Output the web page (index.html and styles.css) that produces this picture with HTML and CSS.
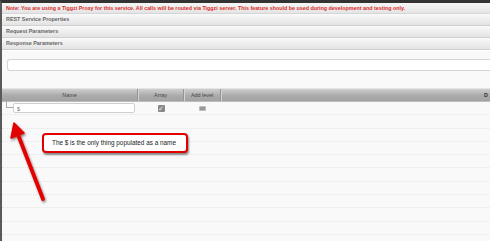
FILE: index.html
```html
<!DOCTYPE html>
<html lang="en">
<head>
    <meta charset="UTF-8">
    <title>Service Editor</title>
    <link rel="stylesheet" href="styles.css">
</head>
<body>
    <div class="note">Note: You are using a Tiggzi Proxy for this service. All calls will be routed via Tiggzi server. This feature should be used during development and testing only.</div>
    <div class="section">REST Service Properties</div>
    <div class="section">Request Parameters</div>
    <div class="section">Response Parameters</div>

    <div class="panel">
        <div class="wide-input"></div>
    </div>

    <div class="grid">
        <div class="grid-head">
            <div class="col col-name">Name</div>
            <div class="col col-array">Array</div>
            <div class="col col-add">Add level</div>
            <div class="col col-rest"></div>
            <div class="col col-last">D</div>
        </div>
        <div class="grid-row">
            <div class="cell-name">
                <span class="tree"></span>
                <div class="name-input">$</div>
            </div>
            <div class="cell-array"><span class="check">&#10003;</span></div>
            <div class="cell-add"><span class="mini-btn"></span></div>
        </div>
        <div class="grid-row"></div>
        <div class="grid-row"></div>
        <div class="grid-row"></div>
        <div class="grid-row"></div>
        <div class="grid-row"></div>
        <div class="grid-row"></div>
        <div class="grid-row"></div>
        <div class="grid-row"></div>
        <div class="grid-row"></div>
    </div>

    <!-- annotation layer -->
    <div class="callout">The $ is the only thing populated as a name</div>
    <svg class="arrow" width="60" height="90" viewBox="0 0 60 90">
        <g fill="#e30000" stroke="#e30000" filter="url(#sh)">
            <line x1="41" y1="82" x2="15" y2="15" stroke-width="3.8" stroke-linecap="round"/>
            <polygon points="12,6 9,21 22,16" stroke-width="1.5" stroke-linejoin="round"/>
        </g>
        <defs>
            <filter id="sh" x="-50%" y="-50%" width="200%" height="200%">
                <feDropShadow dx="1" dy="1.5" stdDeviation="1" flood-color="#000" flood-opacity="0.5"/>
            </filter>
        </defs>
    </svg>
</body>
</html>
```

FILE: styles.css
```css
body {
    margin: 0;
    font-family: "Liberation Sans", Arial, sans-serif;
    background: #f9f9f9;
    border-top: 3px solid #333;
    border-left: 2px solid #5a5a5a;
    height: 238px;
    overflow: hidden;
    position: relative;
}
.note {
    height: 10px;
    line-height: 10px;
    padding-left: 4px;
    font-size: 5.35px;
    font-weight: bold;
    color: #d92b2b;
    white-space: nowrap;
    background: linear-gradient(#f6f6f6, #e4e4e4);
    border-bottom: 1px solid #d6d6d6;
}
.section {
    height: 11px;
    line-height: 11px;
    padding-left: 4px;
    font-size: 5.4px;
    font-weight: bold;
    color: #666;
    background: linear-gradient(#fafafa, #e3e3e3);
    border-bottom: 1px solid #d0d0d0;
}
.panel {
    height: 38px;
    padding: 8px 0 0 5px;
    box-sizing: border-box;
    background: #f9f9f9;
    border-top: 1px solid #fff;
}
.wide-input {
    height: 10px;
    background: #fff;
    border: 1px solid #d4d4d4;
    border-right: none;
    border-radius: 3px 0 0 3px;
}
.grid-head {
    display: flex;
    height: 12px;
    background: linear-gradient(#cfcfcf, #ababab 55%, #a2a2a2);
    border-top: 1px solid #e4e4e4;
    border-bottom: 1px solid #bdbdbd;
    font-size: 5.4px;
    color: #4a4a4a;
}
.col {
    line-height: 12px;
    text-align: center;
    border-right: 1px solid #959595;
    box-shadow: 1px 0 0 #d2d2d2;
}
.col-name { width: 135px; }
.col-array { width: 45px; }
.col-add { width: 36px; }
.col-rest { flex: 1; border-right: none; box-shadow: none; }
.col-last {
    width: 6px;
    border-right: none;
    box-shadow: none;
    font-weight: bold;
    color: #333;
    text-align: left;
}
.grid-row {
    display: flex;
    height: 13.3px;
    box-sizing: border-box;
    border-bottom: 1px dotted #e6e6e6;
}
.cell-name {
    width: 136px;
    display: flex;
    align-items: center;
    padding-left: 4px;
    box-sizing: border-box;
}
.tree {
    width: 6px;
    height: 6px;
    margin-top: -7px;
    border-left: 1px solid #aaa;
    border-bottom: 1px solid #aaa;
}
.name-input {
    width: 122px;
    height: 10px;
    line-height: 10px;
    padding-left: 3px;
    box-sizing: border-box;
    background: #fff;
    border: 1px solid #cfcfcf;
    border-radius: 2px;
    font-size: 5.4px;
    color: #777;
}
.cell-array {
    width: 46px;
    display: flex;
    justify-content: center;
    align-items: center;
}
.check {
    width: 7px;
    height: 7px;
    background: #888;
    color: #eee;
    font-size: 7px;
    line-height: 7px;
    text-align: center;
    border-radius: 1px;
}
.cell-add {
    width: 36px;
    display: flex;
    justify-content: center;
    align-items: center;
}
.mini-btn {
    width: 5px;
    height: 3px;
    background: #999;
    border: 1px solid #bbb;
    border-radius: 1px;
}
.callout {
    position: absolute;
    left: 40px;
    top: 130px;
    width: 146px;
    height: 20px;
    box-sizing: border-box;
    line-height: 16px;
    padding-left: 8px;
    border: 2px solid #e30000;
    border-radius: 4px;
    background: #fff;
    font-size: 6.4px;
    color: #222;
    box-shadow: 1px 2px 2px rgba(0, 0, 0, 0.45);
}
.arrow {
    position: absolute;
    left: 0;
    top: 114px;
}
```
